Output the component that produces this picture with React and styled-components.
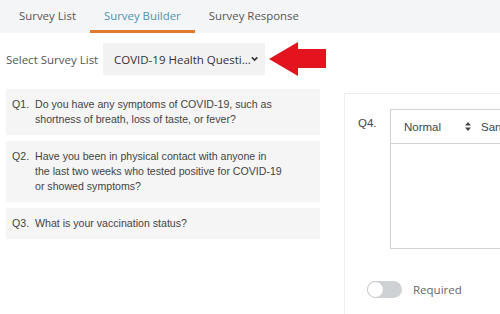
import React from "react";
import styled, { createGlobalStyle } from "styled-components";

const Global = createGlobalStyle`
  html, body { margin: 0; padding: 0; background: #fff; overflow: hidden; }
  body { width: 500px; height: 314px; font-family: "Open Sans", "Liberation Sans", sans-serif; }
  * { box-sizing: border-box; }
`;

const Page = styled.div`
  width: 500px;
  height: 314px;
  overflow: hidden;
`;

const TabBar = styled.div`
  display: flex;
  height: 33px;
  padding-left: 5px;
  background: #f4f5f6;
`;

const Tab = styled.div`
  display: flex;
  align-items: center;
  padding: 0 14px;
  font-size: 11.4px;
  color: ${(p) => (p.$active ? "#4b94ae" : "#555")};
  border-bottom: 3px solid ${(p) => (p.$active ? "#e07a2f" : "transparent")};
`;

const Main = styled.div`
  display: flex;
  padding-left: 6px;
`;

const LeftColumn = styled.div`
  width: 314px;
  flex-shrink: 0;
`;

const SelectRow = styled.div`
  display: flex;
  align-items: center;
  margin-top: 10px;
  height: 32px;
`;

const Label = styled.span`
  flex-shrink: 0;
  white-space: nowrap;
  font-size: 11.5px;
  color: #555;
  width: 97px;
`;

const Dropdown = styled.div`
  display: flex;
  flex-shrink: 0;
  align-items: center;
  justify-content: space-between;
  width: 162px;
  height: 32px;
  padding: 0 7px 0 11px;
  background: #f2f2f2;
  border-radius: 2px;
  font-size: 11.5px;
  color: #333;
  white-space: nowrap;
`;

const ArrowMark = styled.svg`
  flex-shrink: 0;
  margin-left: 3px;
`;

const QuestionList = styled.div`
  display: flex;
  flex-direction: column;
  gap: 6px;
  margin-top: 14px;
`;

const QuestionCard = styled.div`
  display: flex;
  padding: 8px 6px;
  background: #f5f5f5;
  font-family: "Liberation Sans", Arial, sans-serif;
  font-size: 10.6px;
  line-height: 15px;
  color: #444;
`;

const QNum = styled.span`
  width: 23px;
  flex-shrink: 0;
`;

const QText = styled.span``;

const RightPanel = styled.div`
  flex: 1;
  min-width: 0;
  margin-left: 24px;
  margin-top: 60px;
  height: 221px;
  border-top: 1px solid #eeeeee;
  border-left: 1px solid #eeeeee;
  padding: 15px 0 0 13px;
  overflow: hidden;
`;

const QuestionRow = styled.div`
  display: flex;
`;

const QLabel = styled.div`
  width: 32px;
  flex-shrink: 0;
  padding-top: 8px;
  font-family: "Liberation Sans", Arial, sans-serif;
  font-size: 11.5px;
  color: #444;
`;

const Editor = styled.div`
  width: 240px;
  flex-shrink: 0;
  height: 140px;
  border: 1px solid #d2d2d2;
  border-right: none;
`;

const Toolbar = styled.div`
  display: flex;
  align-items: center;
  height: 34px;
  padding-left: 13px;
  border-bottom: 1px solid #d2d2d2;
  font-family: "Liberation Sans", Arial, sans-serif;
  font-size: 11.5px;
  color: #444;
  white-space: nowrap;
`;

const ToolSelect = styled.span`
  display: flex;
  align-items: center;
  width: ${(p) => p.$w}px;
  justify-content: space-between;
  margin-right: ${(p) => p.$gap}px;
`;

const RequiredRow = styled.div`
  display: flex;
  align-items: center;
  gap: 11px;
  margin-top: 32px;
  margin-left: 9px;
`;

const Toggle = styled.div`
  position: relative;
  width: 35px;
  height: 17px;
  border-radius: 9px;
  background: #cfd2d4;
`;

const Knob = styled.div`
  position: absolute;
  left: 0;
  top: 0;
  width: 17px;
  height: 17px;
  border-radius: 50%;
  background: #fff;
  border: 1px solid #c7cacc;
`;

const RequiredText = styled.span`
  font-size: 11.5px;
  color: #666;
`;

const questions = [
  ["Q1.", "Do you have any symptoms of COVID-19, such as", "shortness of breath, loss of taste, or fever?"],
  ["Q2.", "Have you been in physical contact with anyone in", "the last two weeks who tested positive for COVID-19", "or showed symptoms?"],
  ["Q3.", "What is your vaccination status?"],
];

export default function App() {
  return (
    <Page>
      <Global />
      <TabBar>
        <Tab>Survey List</Tab>
        <Tab $active>Survey Builder</Tab>
        <Tab>Survey Response</Tab>
      </TabBar>
      <Main>
        <LeftColumn>
          <SelectRow>
            <Label>Select Survey List</Label>
            <Dropdown>
              <span>COVID-19 Health Questi...</span>
              <svg width="8" height="6" viewBox="0 0 8 6">
                <path d="M1 1.2 L4 4.2 L7 1.2" fill="none" stroke="#333" strokeWidth="1.8" />
              </svg>
            </Dropdown>
            <ArrowMark width="59" height="36" viewBox="0 0 59 36">
              <polygon points="1,18 30,1 30,8 58,8 58,27 30,27 30,35" fill="#e3141e" />
            </ArrowMark>
          </SelectRow>
          <QuestionList>
            {questions.map(([n, ...lines]) => (
              <QuestionCard key={n}>
                <QNum>{n}</QNum>
                <QText>
                  {lines.map((l, i) => (
                    <React.Fragment key={i}>
                      {i > 0 && <br />}
                      {l}
                    </React.Fragment>
                  ))}
                </QText>
              </QuestionCard>
            ))}
          </QuestionList>
        </LeftColumn>
        <RightPanel>
          <QuestionRow>
            <QLabel>Q4.</QLabel>
            <Editor>
              <Toolbar>
                <ToolSelect $w={67} $gap={10}>
                  <span>Normal</span>
                  <svg width="6" height="9" viewBox="0 0 6 9">
                    <path d="M3 0 L6 3.5 H0 Z M3 9 L6 5.5 H0 Z" fill="#444" />
                  </svg>
                </ToolSelect>
                <span>Sans Serif</span>
              </Toolbar>
            </Editor>
          </QuestionRow>
          <RequiredRow>
            <Toggle>
              <Knob />
            </Toggle>
            <RequiredText>Required</RequiredText>
          </RequiredRow>
        </RightPanel>
      </Main>
    </Page>
  );
}
